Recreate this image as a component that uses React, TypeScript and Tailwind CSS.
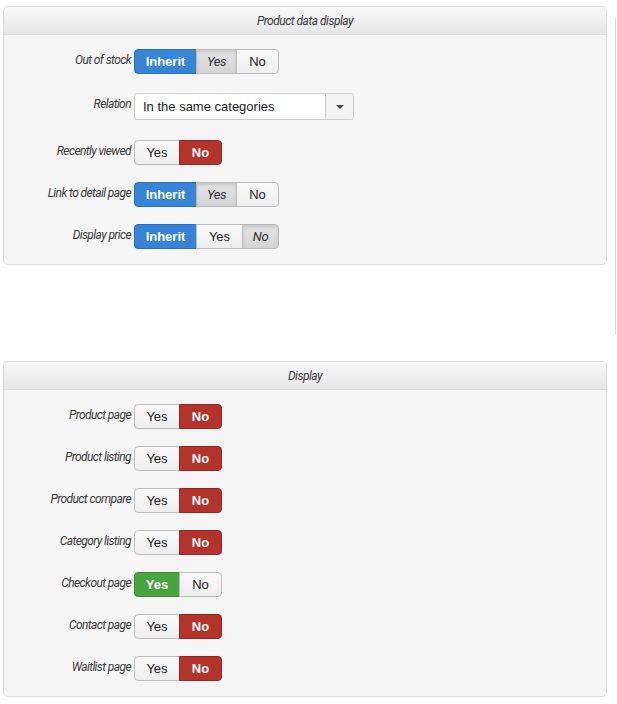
import React from 'react';

type Tone = 'primary' | 'danger' | 'success' | 'inherited' | 'plain';

type Option = {
  label: string;
  tone: Tone;
  width: string;
};

type Row = {
  id: number;
  title: string;
  options?: Option[];
  select?: string;
  height: string;
};

const toneClass: Record<Tone, string> = {
  primary: 'bg-[#3584d6] border-[#2a6fb8] text-white font-bold',
  danger: 'bg-[#b4332b] border-[#962a23] text-white font-bold',
  success: 'bg-[#48a43f] border-[#3c8c34] text-white font-bold',
  inherited:
    "bg-gradient-to-b from-[#e2e2e2] to-[#d4d4d4] border-[#b9b9b9] text-[#333] italic tracking-[-0.4px] font-['Roboto',sans-serif] shadow-[inset_0_2px_3px_rgba(0,0,0,0.12)]",
  plain: 'bg-gradient-to-b from-[#f8f8f8] to-[#eeeeee] border-[#bdbdbd] text-[#222]',
};

const productRows: Row[] = [
  {
    id: 1,
    title: 'Out of stock',
    height: 'h-[44px]',
    options: [
      { label: 'Inherit', tone: 'primary', width: 'w-[63px]' },
      { label: 'Yes', tone: 'inherited', width: 'w-[41px]' },
      { label: 'No', tone: 'plain', width: 'w-[43px]' },
    ],
  },
  { id: 2, title: 'Relation', height: 'h-[47px]', select: 'In the same categories' },
  {
    id: 3,
    title: 'Recently viewed',
    height: 'h-[42px]',
    options: [
      { label: 'Yes', tone: 'plain', width: 'w-[46px]' },
      { label: 'No', tone: 'danger', width: 'w-[43px]' },
    ],
  },
  {
    id: 4,
    title: 'Link to detail page',
    height: 'h-[42px]',
    options: [
      { label: 'Inherit', tone: 'primary', width: 'w-[63px]' },
      { label: 'Yes', tone: 'inherited', width: 'w-[41px]' },
      { label: 'No', tone: 'plain', width: 'w-[43px]' },
    ],
  },
  {
    id: 5,
    title: 'Display price',
    height: 'h-[25px]',
    options: [
      { label: 'Inherit', tone: 'primary', width: 'w-[63px]' },
      { label: 'Yes', tone: 'plain', width: 'w-[47px]' },
      { label: 'No', tone: 'inherited', width: 'w-[37px]' },
    ],
  },
];

const yesNo = (yes: boolean): Option[] => [
  { label: 'Yes', tone: yes ? 'success' : 'plain', width: 'w-[46px]' },
  { label: 'No', tone: yes ? 'plain' : 'danger', width: 'w-[43px]' },
];

const displayPages = [
  'Product page',
  'Product listing',
  'Product compare',
  'Category listing',
  'Checkout page',
  'Contact page',
  'Waitlist page',
];

const displayRows: Row[] = displayPages.map((title, i) => ({
  id: i + 1,
  title,
  height: i === displayPages.length - 1 ? 'h-[25px]' : 'h-[42px]',
  options: yesNo(title === 'Checkout page'),
}));

const labelFont = {
  fontFamily: 'Roboto, "Liberation Sans", sans-serif',
};

const ButtonGroup = ({ options }: { options: Option[] }) => (
  <div className="flex h-[25px] font-['Liberation_Sans',Arial,sans-serif]">
    {options.map((opt, i) => (
      <span
        key={opt.label}
        className={`flex items-center justify-center border text-[13px] leading-none ${opt.width} ${
          toneClass[opt.tone]
        } ${i === 0 ? 'rounded-l-[4px]' : '-ml-px'} ${
          i === options.length - 1 ? 'rounded-r-[4px]' : ''
        }`}
      >
        {opt.label}
      </span>
    ))}
  </div>
);

const SelectBox = ({ value }: { value: string }) => (
  <div className="flex h-[27px] w-[220px] rounded-[3px] border border-[#cccccc] bg-white font-['Liberation_Sans',Arial,sans-serif] text-[13px] text-[#222]">
    <span className="flex flex-1 items-center pl-[8px]">{value}</span>
    <span className="flex w-[28px] items-center justify-center rounded-r-[3px] border-l border-[#cccccc] bg-[#f3f3f3]">
      <span className="h-0 w-0 border-x-[4px] border-t-[4px] border-x-transparent border-t-[#444]" />
    </span>
  </div>
);

const Panel = ({ title, rows }: { title: string; rows: Row[] }) => (
  <section className="w-[604px] overflow-hidden rounded-[5px] border border-[#dcdcdc] bg-[#f5f5f5]">
    <header
      className="flex h-[28px] items-center justify-center border-b border-[#dedede] bg-gradient-to-b from-[#f8f8f8] to-[#e6e6e6] text-[12px] italic tracking-[-0.5px] text-[#3a3a3a]"
      style={labelFont}
    >
      {title}
    </header>
    <div className="pt-[14px] pb-[15px]">
      {rows.map((row) => (
        <div key={row.id} className={`flex items-start ${row.height}`}>
          <label
            className="w-[130px] shrink-0 pr-[3px] pt-[2px] text-right text-[12px] italic tracking-[-0.6px] text-[#3a3a3a]"
            style={labelFont}
          >
            {row.title}
          </label>
          {row.select ? (
            <SelectBox value={row.select} />
          ) : (
            <ButtonGroup options={row.options ?? []} />
          )}
        </div>
      ))}
    </div>
  </section>
);

export default function App() {
  return (
    <div className="flex min-h-[704px] w-[617px] bg-white">
      <div className="flex w-[608px] flex-col gap-[96px] pl-[3px] pt-[6px]">
        <Panel title="Product data display" rows={productRows} />
        <Panel title="Display" rows={displayRows} />
      </div>
      <div className="ml-[7px] mt-[18px] h-[317px] border-l border-[#dddddd]" />
    </div>
  );
}
